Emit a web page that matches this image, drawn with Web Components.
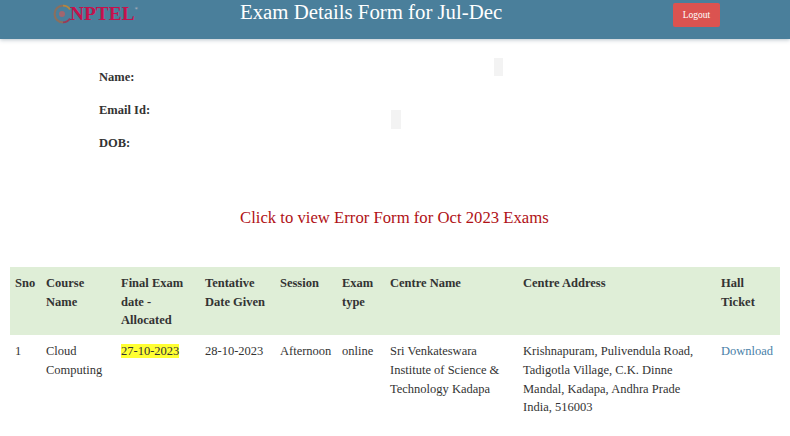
<!DOCTYPE html>
<html>
<head>
<meta charset="utf-8">
<title>Exam Details</title>
<style>
  html, body { margin: 0; padding: 0; background: #fff; overflow: hidden; }
  body { width: 790px; height: 436px; font-family: "Liberation Serif", serif; position: relative; }
</style>
</head>
<body>
<exam-header title-text="Exam Details Form for Jul-Dec"></exam-header>
<info-list>
  <info-row>Name:</info-row>
  <info-row>Email Id:</info-row>
  <info-row>DOB:</info-row>
</info-list>
<error-link>Click to view Error Form for Oct 2023 Exams</error-link>
<exam-table></exam-table>
<scan-smudge style="left:494px;top:58px;width:9px;height:18px"></scan-smudge>
<scan-smudge style="left:391px;top:110px;width:10px;height:19px"></scan-smudge>

<script>
// page header bar
var template_header = document.createElement("template");
template_header.innerHTML = `
<style>
  :host {
    display: flex;
    align-items: flex-start;
    height: 39px;
    background: #4a7f9b;
    box-shadow: 0 1px 4px rgba(60, 90, 110, .35);
    position: relative;
  }
  #logo {
    display: flex;
    align-items: center;
    width: 186px;
    padding: 3px 0 0 53px;
    box-sizing: border-box;
    height: 24px;
  }
  #logo svg { display: block; flex: none; }
  #logo span {
    font: bold 19.4px/20px "Liberation Serif", serif;
    color: #c4124c;
    margin-left: -1px;
    white-space: nowrap;
  }
  #logo sup { font-size: 4px; line-height: 0; vertical-align: 10px; color: #d9c3c8; }
  h1 {
    margin: 0;
    width: 432px;
    padding: 0 0 0 54px;
    box-sizing: border-box;
    font: normal 20.8px/24px "Liberation Serif", serif;
    color: #fff;
  }
  button {
    margin: 3px 0 0 55px;
    width: 47px;
    height: 24px;
    padding: 0;
    border: 0;
    border-radius: 2px;
    background: #db5350;
    color: #fff;
    font: 9.5px "Liberation Serif", serif;
  }
</style>
<div id="logo">
  <svg width="18" height="20" viewBox="0 0 18 20">
    <path d="M10 1.6A8.4 8.4 0 0 0 10 18.4" fill="none" stroke="#8a6f5e" stroke-width="2.2"/>
    <path d="M10 1.6A8.4 8.4 0 0 1 17 5.4" fill="none" stroke="#b5863f" stroke-width="1.8"/>
    <path d="M17 14.6A8.4 8.4 0 0 1 10 18.4" fill="none" stroke="#9c3a55" stroke-width="1.8"/>
    <circle cx="9" cy="10" r="3" fill="#a2666e"/>
  </svg>
  <span>NPTEL<sup>&reg;</sup></span>
</div>
<h1></h1>
<button>Logout</button>
`;

class ExamHeader extends HTMLElement {
    constructor(){
        super();
        this.attachShadow({mode:"open"});
    }
    connectedCallback(){
        this.shadowRoot.appendChild(template_header.content.cloneNode(true));
        this.shadowRoot.querySelector("h1").textContent = this.getAttribute("title-text");
    }
}
customElements.define("exam-header", ExamHeader);

// student details block
var template_infolist = document.createElement("template");
template_infolist.innerHTML = `
<style>
  :host {
    display: flex;
    flex-direction: column;
    gap: 15px;
    padding: 29px 0 0 99px;
  }
</style>
<slot></slot>
`;

class InfoList extends HTMLElement {
    constructor(){
        super();
        this.attachShadow({mode:"open"});
        this.shadowRoot.appendChild(template_infolist.content.cloneNode(true));
    }
}
customElements.define("info-list", InfoList);

var template_inforow = document.createElement("template");
template_inforow.innerHTML = `
<style>
  :host {
    display: block;
    font: bold 12.5px/18px "Liberation Serif", serif;
    color: #333;
  }
</style>
<slot></slot>
`;

class InfoRow extends HTMLElement {
    constructor(){
        super();
        this.attachShadow({mode:"open"});
        this.shadowRoot.appendChild(template_inforow.content.cloneNode(true));
    }
}
customElements.define("info-row", InfoRow);

// red link line
var template_errorlink = document.createElement("template");
template_errorlink.innerHTML = `
<style>
  :host {
    display: block;
    margin: 54px 0 0 0;
    padding-left: 240px;
    font: 16.7px/24px "Liberation Serif", serif;
    color: #b01116;
  }
</style>
<slot></slot>
`;

class ErrorLink extends HTMLElement {
    constructor(){
        super();
        this.attachShadow({mode:"open"});
        this.shadowRoot.appendChild(template_errorlink.content.cloneNode(true));
    }
}
customElements.define("error-link", ErrorLink);

// exam table
var template_table = document.createElement("template");
template_table.innerHTML = `
<style>
  :host {
    display: block;
    margin: 37px 10px 0 10px;
    font: 12.5px/18.7px "Liberation Serif", serif;
    color: #333;
  }
  table { border-collapse: collapse; table-layout: fixed; width: 770px; }
  th, td { padding: 7px 5px 5px 5px; text-align: left; vertical-align: top; }
  th { background: #dfeed7; font-weight: bold; }
  mark { background: #ffff33; color: #333; }
  a { color: #4a7fa8; text-decoration: none; }
</style>
<table>
  <colgroup>
    <col style="width:31px"><col style="width:75px"><col style="width:84px"><col style="width:75px">
    <col style="width:62px"><col style="width:48px"><col style="width:133px"><col style="width:198px"><col style="width:64px">
  </colgroup>
  <thead>
    <tr>
      <th>Sno</th><th>Course Name</th><th>Final Exam date - Allocated</th><th>Tentative Date Given</th>
      <th>Session</th><th>Exam type</th><th>Centre Name</th><th>Centre Address</th><th>Hall Ticket</th>
    </tr>
  </thead>
  <tbody>
    <tr>
      <td>1</td>
      <td>Cloud Computing</td>
      <td><mark>27-10-2023</mark></td>
      <td>28-10-2023</td>
      <td>Afternoon</td>
      <td>online</td>
      <td>Sri Venkateswara Institute of Science &amp; Technology Kadapa</td>
      <td>Krishnapuram, Pulivendula Road,<br>Tadigotla Village, C.K. Dinne<br>Mandal, Kadapa, Andhra Prade<br>India, 516003</td>
      <td><a href="#">Download</a></td>
    </tr>
  </tbody>
</table>
`;

class ExamTable extends HTMLElement {
    constructor(){
        super();
        this.attachShadow({mode:"open"});
        this.shadowRoot.appendChild(template_table.content.cloneNode(true));
    }
}
customElements.define("exam-table", ExamTable);

// faint grey marks left on the scan, they sit over the page
class ScanSmudge extends HTMLElement {
    constructor(){
        super();
        this.attachShadow({mode:"open"}).innerHTML = `
        <style>:host { position: absolute; display: block; background: #f3f3f3; }</style>`;
    }
}
customElements.define("scan-smudge", ScanSmudge);
</script>
</body>
</html>
